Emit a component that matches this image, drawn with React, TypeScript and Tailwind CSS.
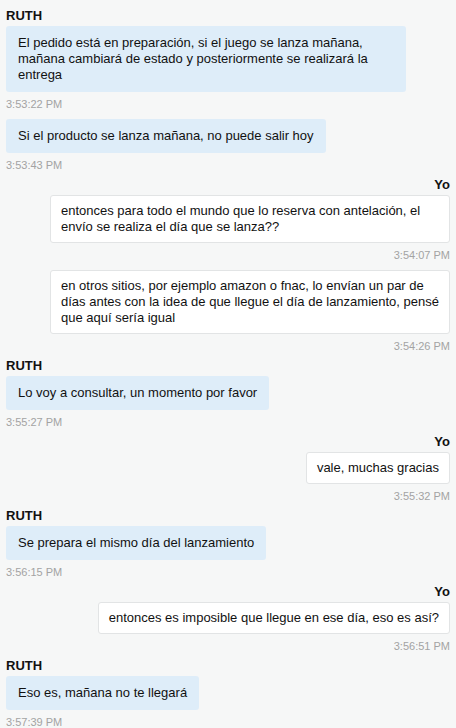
import React from "react";

type Msg = { text: string; time: string };
type Group = { me: boolean; msgs: Msg[] };

const groups: Group[] = [
  {
    me: false,
    msgs: [
      {
        text: "El pedido está en preparación, si el juego se lanza mañana, mañana cambiará de estado y posteriormente se realizará la entrega",
        time: "3:53:22 PM",
      },
      { text: "Si el producto se lanza mañana, no puede salir hoy", time: "3:53:43 PM" },
    ],
  },
  {
    me: true,
    msgs: [
      {
        text: "entonces para todo el mundo que lo reserva con antelación, el envío se realiza el día que se lanza??",
        time: "3:54:07 PM",
      },
      {
        text: "en otros sitios, por ejemplo amazon o fnac, lo envían un par de días antes con la idea de que llegue el día de lanzamiento, pensé que aquí sería igual",
        time: "3:54:26 PM",
      },
    ],
  },
  { me: false, msgs: [{ text: "Lo voy a consultar, un momento por favor", time: "3:55:27 PM" }] },
  { me: true, msgs: [{ text: "vale, muchas gracias", time: "3:55:32 PM" }] },
  { me: false, msgs: [{ text: "Se prepara el mismo día del lanzamiento", time: "3:56:15 PM" }] },
  { me: true, msgs: [{ text: "entonces es imposible que llegue en ese día, eso es así?", time: "3:56:51 PM" }] },
  { me: false, msgs: [{ text: "Eso es, mañana no te llegará", time: "3:57:39 PM" }] },
];

export default function App() {
  return (
    <div
      className="w-[456px] h-[728px] overflow-hidden bg-[#f6f7f7] text-[#111]"
      style={{ fontFamily: '"Liberation Sans", Arial, sans-serif' }}
    >
      <div className="px-[6px] mt-[-11px] flex flex-col">
        <div className="text-[11px] leading-[14px] text-[#a3a3a3] text-right">3:52:29 PM</div>
        {groups.map((g, gi) => (
          <div key={gi} className={`flex flex-col mt-[4.5px] ${g.me ? "items-end" : "items-start"}`}>
            <div className="text-[13px] leading-4 font-bold text-[#111] mb-[2.5px]">
              {g.me ? "Yo" : "RUTH"}
            </div>
            {g.msgs.map((m, mi) => (
              <div
                key={mi}
                className={`flex flex-col w-full ${g.me ? "items-end" : "items-start"} ${mi > 0 ? "mt-[8px]" : ""}`}
              >
                <div
                  className={
                    g.me
                      ? "max-w-[400px] w-fit bg-white border border-[#e2e4e5] rounded-[3px] px-[10px] py-[7px] text-[13px] leading-4"
                      : "max-w-[400px] w-fit bg-[#deedf9] rounded-[3px] px-3 py-[9px] text-[13px] leading-4"
                  }
                >
                  {m.text}
                </div>
                <div className="mt-[5px] text-[11px] leading-[14px] text-[#a3a3a3]">{m.time}</div>
              </div>
            ))}
          </div>
        ))}
      </div>
    </div>
  );
}
